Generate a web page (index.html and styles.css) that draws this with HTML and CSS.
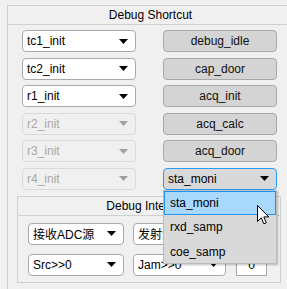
FILE: index.html
```html
<!DOCTYPE html>
<html>
<head>
<meta charset="utf-8">
<link rel="stylesheet" href="styles.css">
</head>
<body>
<div class="panel outer">
  <div class="ptitle">Debug Shortcut</div>
  <div class="pbody">
    <div class="grid">
      <div class="dd"><span>tc1_init</span><svg class="arr" width="9" height="5" viewBox="0 0 9 5"><polygon points="0,0 9,0 4.5,5"/></svg></div>
      <div class="btn">debug_idle</div>
      <div class="dd"><span>tc2_init</span><svg class="arr" width="9" height="5" viewBox="0 0 9 5"><polygon points="0,0 9,0 4.5,5"/></svg></div>
      <div class="btn">cap_door</div>
      <div class="dd"><span>r1_init</span><svg class="arr" width="9" height="5" viewBox="0 0 9 5"><polygon points="0,0 9,0 4.5,5"/></svg></div>
      <div class="btn">acq_init</div>
      <div class="dd off"><span>r2_init</span><svg class="arr" width="9" height="5" viewBox="0 0 9 5"><polygon points="0,0 9,0 4.5,5"/></svg></div>
      <div class="btn">acq_calc</div>
      <div class="dd off"><span>r3_init</span><svg class="arr" width="9" height="5" viewBox="0 0 9 5"><polygon points="0,0 9,0 4.5,5"/></svg></div>
      <div class="btn">acq_door</div>
      <div class="dd off"><span>r4_init</span><svg class="arr" width="9" height="5" viewBox="0 0 9 5"><polygon points="0,0 9,0 4.5,5"/></svg></div>
      <div class="dd open"><span>sta_moni</span><svg class="arr" width="9" height="5" viewBox="0 0 9 5"><polygon points="0,0 9,0 4.5,5"/></svg></div>
    </div>
    <div class="panel inner">
      <div class="ptitle">Debug Interface</div>
      <div class="igrid">
        <div class="dd"><span>接收ADC源</span><svg class="arr" width="9" height="5" viewBox="0 0 9 5"><polygon points="0,0 9,0 4.5,5"/></svg></div>
        <div class="dd"><span>发射源</span><svg class="arr" width="9" height="5" viewBox="0 0 9 5"><polygon points="0,0 9,0 4.5,5"/></svg></div>
        <div class="edit">0</div>
        <div class="dd"><span>Src&gt;&gt;0</span><svg class="arr" width="9" height="5" viewBox="0 0 9 5"><polygon points="0,0 9,0 4.5,5"/></svg></div>
        <div class="dd"><span>Jam&gt;&gt;0</span><svg class="arr" width="9" height="5" viewBox="0 0 9 5"><polygon points="0,0 9,0 4.5,5"/></svg></div>
        <div class="edit">0</div>
      </div>
    </div>
  </div>
</div>
<div class="list">
  <div class="item sel">sta_moni</div>
  <div class="item">rxd_samp</div>
  <div class="item">coe_samp</div>
</div>
<svg class="cursor" width="13" height="21" viewBox="0 0 13 21"><path d="M0.5,0.5 L0.5,16.5 L4.3,12.8 L6.8,18.8 L9.3,17.8 L6.8,11.9 L11.8,11.9 Z" fill="#fff" stroke="#000" stroke-width="1" stroke-linejoin="miter"/></svg>
</body>
</html>
```
FILE: styles.css
```css
html, body {
  margin: 0;
  padding: 0;
}
body {
  width: 287px;
  height: 289px;
  overflow: hidden;
  background: #f0f0f0;
  font-family: "Liberation Sans", Arial, "Noto Sans CJK SC", sans-serif;
  font-size: 12px;
  color: #000;
  position: relative;
  padding: 5px 0 0 7px;
  box-sizing: border-box;
}
.panel {
  border: 1px solid #cfcfcf;
  box-sizing: border-box;
}
.outer {
  width: 280px;
  height: 284px;
  border-right: 0;
  border-bottom: 0;
}
.ptitle {
  height: 18px;
  line-height: 18px;
  text-align: center;
  border-bottom: 1px solid #cfcfcf;
}
.outer > .ptitle {
  margin-right: -6px;
}
.pbody {
  padding: 5px 0 0 14px;
}
.grid {
  display: grid;
  grid-template-columns: 114px 114px;
  grid-auto-rows: 22px;
  column-gap: 27px;
  row-gap: 5.6px;
}
.dd {
  box-sizing: border-box;
  height: 22px;
  border: 1px solid #a9a9a9;
  border-radius: 4px;
  background: #fff;
  display: flex;
  align-items: center;
  justify-content: space-between;
  padding: 0 7px 0 4px;
  white-space: nowrap;
  overflow: hidden;
}
.dd .arr {
  flex: none;
  fill: #000;
}
.dd.off {
  background: #f0f0f0;
  border-color: #dadada;
  color: #a8a8a8;
}
.dd.off .arr {
  fill: #a0a0a0;
}
.dd.open {
  background: #d9d9d9;
  border-color: #2b9cf2;
}
.btn {
  box-sizing: border-box;
  height: 22px;
  border: 1px solid #a8a8a8;
  border-radius: 4px;
  background: #d4d4d4;
  display: flex;
  align-items: center;
  justify-content: center;
  color: #111;
}
.inner {
  width: 264px;
  margin: 6px 0 0 -5px;
}
.igrid {
  display: grid;
  grid-template-columns: 96px 93px 32px;
  grid-auto-rows: 22px;
  column-gap: 9px;
  row-gap: 9px;
  padding: 7px 0 6px 10px;
}
.igrid .edit {
  margin-left: 1px;
  box-sizing: border-box;
  border: 1px solid #a6a6a6;
  background: #fff;
  display: flex;
  align-items: center;
  justify-content: center;
}
.list {
  position: absolute;
  left: 163px;
  top: 190px;
  width: 114px;
  height: 74px;
  box-sizing: border-box;
  background: #d9d9d9;
  border: 1px solid #bcbcbc;
  box-shadow: 1px 1px 2px rgba(0,0,0,0.25);
}
.item {
  box-sizing: border-box;
  height: 24.4px;
  line-height: 22px;
  padding-left: 5px;
  border: 1px solid transparent;
}
.item.sel {
  background: #a8d8fb;
  border-color: #2293ea;
}
.cursor {
  position: absolute;
  left: 257px;
  top: 205px;
}
```
